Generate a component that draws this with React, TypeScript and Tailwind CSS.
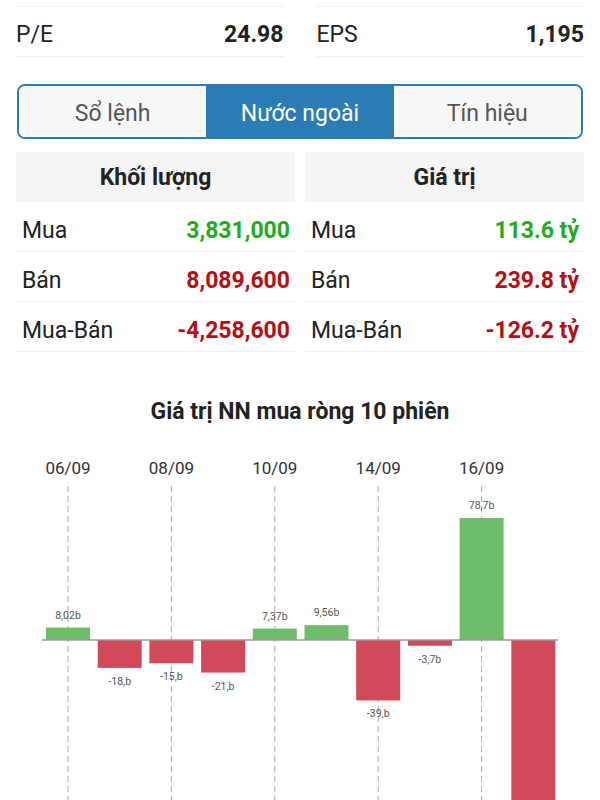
import React from "react";

const bars = [
  { v: 8.02, label: "8,02b" },
  { v: -18, label: "-18,b" },
  { v: -15, label: "-15,b" },
  { v: -21, label: "-21,b" },
  { v: 7.37, label: "7,37b" },
  { v: 9.56, label: "9,56b" },
  { v: -39, label: "-39,b" },
  { v: -3.7, label: "-3,7b" },
  { v: 78.7, label: "78,7b" },
  { v: -133, label: "" },
];

const dates = ["06/09", "08/09", "10/09", "14/09", "16/09"];

function Chart() {
  const zero = 199;
  const scale = 1.55;
  const step = 51.7;
  const barW = 44;
  return (
    <svg width="600" height="360" viewBox="0 0 600 360" className="block">
      {dates.map((d, i) => {
        const x = 68 + i * 2 * step;
        return (
          <g key={d}>
            <text
              x={x}
              y={33}
              textAnchor="middle"
              fontSize="17"
              fill="#333"
              fontFamily="Roboto, sans-serif"
            >
              {d}
            </text>
            <line
              x1={x}
              x2={x}
              y1={45}
              y2={362}
              stroke="#aaa"
              strokeWidth="1"
              strokeDasharray="6 4"
            />
          </g>
        );
      })}
      {bars.map((b, i) => {
        const cx = 68 + i * step;
        const h = Math.abs(b.v) * scale;
        const pos = b.v >= 0;
        const y = pos ? zero - h : zero;
        return (
          <g key={i}>
            <rect
              x={cx - barW / 2}
              y={y}
              width={barW}
              height={h}
              fill={pos ? "#6fbd69" : "#d24a5a"}
            />
            {b.label && (
              <text
                x={cx}
                y={pos ? y - 9 : zero + h + 17}
                textAnchor="middle"
                fontSize="10.5"
                fill="#555"
                fontFamily="Roboto, sans-serif"
              >
                {b.label}
              </text>
            )}
          </g>
        );
      })}
      <line x1={42} x2={558} y1={zero} y2={zero} stroke="#999" strokeWidth="1.5" />
    </svg>
  );
}

function Row({ label, value, color }: { label: string; value: string; color: string }) {
  return (
    <div className="flex h-[50px] items-center justify-between border-b border-[#eeeeee] pl-[6px] pr-[5px] pt-[9px]">
      <span className="text-[23px] text-[#222]">{label}</span>
      <span className={`text-[23px] font-bold ${color}`}>{value}</span>
    </div>
  );
}

export default function App() {
  return (
    <div className="h-[800px] w-[600px] overflow-hidden bg-white font-['Roboto',sans-serif]">
      <div className="grid grid-cols-2 gap-x-[33px] px-4 pt-[6px]">
        <div className="flex h-[51px] items-center justify-between border-y border-[#eeeeee] pt-[8px]">
          <span className="text-[23px] text-[#222]">P/E</span>
          <span className="text-[23px] font-bold text-[#222]">24.98</span>
        </div>
        <div className="flex h-[51px] items-center justify-between border-y border-[#eeeeee] pt-[8px]">
          <span className="text-[23px] text-[#222]">EPS</span>
          <span className="text-[23px] font-bold text-[#222]">1,195</span>
        </div>
      </div>

      <div className="mx-[17px] mt-[27px] flex h-[55px] overflow-hidden rounded-[8px] border-2 border-[#2b7bb5]">
        <div className="flex flex-1 items-center justify-center bg-[#f7f7f7] pt-[6px] text-[23px] text-[#555]">
          Sổ lệnh
        </div>
        <div className="flex flex-1 items-center justify-center bg-[#2b7bb5] pt-[6px] text-[23px] text-white">
          Nước ngoài
        </div>
        <div className="flex flex-1 items-center justify-center bg-[#f7f7f7] pt-[6px] text-[23px] text-[#555]">
          Tín hiệu
        </div>
      </div>

      <div className="mt-[13px] grid grid-cols-2 gap-x-[10px] px-4">
        <div>
          <div className="flex h-[50px] items-center justify-center bg-[#f5f5f5] pt-[2px] text-[23px] font-bold text-[#222]">
            Khối lượng
          </div>
          <Row label="Mua" value="3,831,000" color="text-[#22aa22]" />
          <Row label="Bán" value="8,089,600" color="text-[#b30f14]" />
          <Row label="Mua-Bán" value="-4,258,600" color="text-[#b30f14]" />
        </div>
        <div>
          <div className="flex h-[50px] items-center justify-center bg-[#f5f5f5] pt-[2px] text-[23px] font-bold text-[#222]">
            Giá trị
          </div>
          <Row label="Mua" value="113.6 tỷ" color="text-[#22aa22]" />
          <Row label="Bán" value="239.8 tỷ" color="text-[#b30f14]" />
          <Row label="Mua-Bán" value="-126.2 tỷ" color="text-[#b30f14]" />
        </div>
      </div>

      <div className="mt-[43px] text-center text-[23px] font-bold text-[#222]">
        Giá trị NN mua ròng 10 phiên
      </div>

      <div className="mt-[11px]">
        <Chart />
      </div>
    </div>
  );
}
